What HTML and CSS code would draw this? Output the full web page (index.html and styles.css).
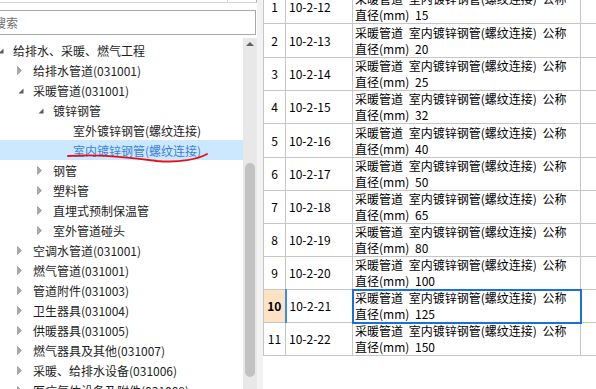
FILE: index.html
```html
<!DOCTYPE html>
<html lang="zh">
<head>
<meta charset="utf-8">
<title>定额树</title>
<link rel="stylesheet" href="styles.css">
</head>
<body>
<div class="app">
  <div class="left">
    <div class="topbar"><div class="topfield"></div><div class="topbtn"></div></div>
    <div class="search"><span class="ph">搜索</span></div>
    <div class="treewrap">
      <div class="tree">
        <div class="row l0"><span class="tw"><svg class="ex" width="6" height="6" viewBox="0 0 6 6"><path d="M5.5 0.5 L5.5 5.5 L0.5 5.5Z"/></svg></span><span>给排水、采暖、燃气工程</span></div>
        <div class="row l1"><span class="tw"><svg class="co" width="5" height="9" viewBox="0 0 5 9"><path d="M0.5 0.5 L4.5 4.5 L0.5 8.5Z"/></svg></span><span>给排水管道(031001)</span></div>
        <div class="row l1"><span class="tw"><svg class="ex" width="6" height="6" viewBox="0 0 6 6"><path d="M5.5 0.5 L5.5 5.5 L0.5 5.5Z"/></svg></span><span>采暖管道(031001)</span></div>
        <div class="row l2"><span class="tw"><svg class="ex" width="6" height="6" viewBox="0 0 6 6"><path d="M5.5 0.5 L5.5 5.5 L0.5 5.5Z"/></svg></span><span>镀锌钢管</span></div>
        <div class="row l3"><span class="tw"></span><span>室外镀锌钢管(螺纹连接)</span></div>
        <div class="row l3 sel"><span class="tw"></span><span>室内镀锌钢管(螺纹连接)</span></div>
        <div class="row l2"><span class="tw"><svg class="co" width="5" height="9" viewBox="0 0 5 9"><path d="M0.5 0.5 L4.5 4.5 L0.5 8.5Z"/></svg></span><span>钢管</span></div>
        <div class="row l2"><span class="tw"><svg class="co" width="5" height="9" viewBox="0 0 5 9"><path d="M0.5 0.5 L4.5 4.5 L0.5 8.5Z"/></svg></span><span>塑料管</span></div>
        <div class="row l2"><span class="tw"><svg class="co" width="5" height="9" viewBox="0 0 5 9"><path d="M0.5 0.5 L4.5 4.5 L0.5 8.5Z"/></svg></span><span>直埋式预制保温管</span></div>
        <div class="row l2"><span class="tw"><svg class="co" width="5" height="9" viewBox="0 0 5 9"><path d="M0.5 0.5 L4.5 4.5 L0.5 8.5Z"/></svg></span><span>室外管道碰头</span></div>
        <div class="row l1"><span class="tw"><svg class="co" width="5" height="9" viewBox="0 0 5 9"><path d="M0.5 0.5 L4.5 4.5 L0.5 8.5Z"/></svg></span><span>空调水管道(031001)</span></div>
        <div class="row l1"><span class="tw"><svg class="co" width="5" height="9" viewBox="0 0 5 9"><path d="M0.5 0.5 L4.5 4.5 L0.5 8.5Z"/></svg></span><span>燃气管道(031001)</span></div>
        <div class="row l1"><span class="tw"><svg class="co" width="5" height="9" viewBox="0 0 5 9"><path d="M0.5 0.5 L4.5 4.5 L0.5 8.5Z"/></svg></span><span>管道附件(031003)</span></div>
        <div class="row l1"><span class="tw"><svg class="co" width="5" height="9" viewBox="0 0 5 9"><path d="M0.5 0.5 L4.5 4.5 L0.5 8.5Z"/></svg></span><span>卫生器具(031004)</span></div>
        <div class="row l1"><span class="tw"><svg class="co" width="5" height="9" viewBox="0 0 5 9"><path d="M0.5 0.5 L4.5 4.5 L0.5 8.5Z"/></svg></span><span>供暖器具(031005)</span></div>
        <div class="row l1"><span class="tw"><svg class="co" width="5" height="9" viewBox="0 0 5 9"><path d="M0.5 0.5 L4.5 4.5 L0.5 8.5Z"/></svg></span><span>燃气器具及其他(031007)</span></div>
        <div class="row l1"><span class="tw"><svg class="co" width="5" height="9" viewBox="0 0 5 9"><path d="M0.5 0.5 L4.5 4.5 L0.5 8.5Z"/></svg></span><span>采暖、给排水设备(031006)</span></div>
        <div class="row l1"><span class="tw"><svg class="co" width="5" height="9" viewBox="0 0 5 9"><path d="M0.5 0.5 L4.5 4.5 L0.5 8.5Z"/></svg></span><span>医疗气体设备及附件(031008)</span></div>
      </div>
      <div class="vscroll"><div class="up"></div><div class="thumb"></div></div>
    </div>
    <svg class="mark" width="257" height="389" viewBox="0 0 257 389"><path d="M68 156 C 95 154, 128 157, 157 161 C 180 163, 198 159, 207 154" /></svg>
  </div>
  <div class="splitter"></div>
  <div class="right">
    <table class="grid">
      <colgroup><col class="c1"><col class="c2"><col class="c3"><col class="c4"></colgroup>
      <tbody>
        <tr><td class="num">1</td><td class="code">10-2-12</td><td class="desc">采暖管道 室内镀锌钢管(螺纹连接) 公称<br>直径(mm) 15</td><td></td></tr>
        <tr class="tall"><td class="num">2</td><td class="code">10-2-13</td><td class="desc">采暖管道 室内镀锌钢管(螺纹连接) 公称<br>直径(mm) 20</td><td></td></tr>
        <tr><td class="num">3</td><td class="code">10-2-14</td><td class="desc">采暖管道 室内镀锌钢管(螺纹连接) 公称<br>直径(mm) 25</td><td></td></tr>
        <tr><td class="num">4</td><td class="code">10-2-15</td><td class="desc">采暖管道 室内镀锌钢管(螺纹连接) 公称<br>直径(mm) 32</td><td></td></tr>
        <tr class="tall"><td class="num">5</td><td class="code">10-2-16</td><td class="desc">采暖管道 室内镀锌钢管(螺纹连接) 公称<br>直径(mm) 40</td><td></td></tr>
        <tr><td class="num">6</td><td class="code">10-2-17</td><td class="desc">采暖管道 室内镀锌钢管(螺纹连接) 公称<br>直径(mm) 50</td><td></td></tr>
        <tr><td class="num">7</td><td class="code">10-2-18</td><td class="desc">采暖管道 室内镀锌钢管(螺纹连接) 公称<br>直径(mm) 65</td><td></td></tr>
        <tr><td class="num">8</td><td class="code">10-2-19</td><td class="desc">采暖管道 室内镀锌钢管(螺纹连接) 公称<br>直径(mm) 80</td><td></td></tr>
        <tr><td class="num">9</td><td class="code">10-2-20</td><td class="desc">采暖管道 室内镀锌钢管(螺纹连接) 公称<br>直径(mm) 100</td><td></td></tr>
        <tr><td class="num cur">10</td><td class="code">10-2-21</td><td class="desc focus">采暖管道 室内镀锌钢管(螺纹连接) 公称<br>直径(mm) 125</td><td></td></tr>
        <tr><td class="num">11</td><td class="code">10-2-22</td><td class="desc">采暖管道 室内镀锌钢管(螺纹连接) 公称<br>直径(mm) 150</td><td></td></tr>
      </tbody>
    </table>
  </div>
</div>
</body>
</html>
```
FILE: styles.css
```css
html, body {
  margin: 0;
  padding: 0;
}
body {
  width: 596px;
  height: 389px;
  overflow: hidden;
  background: #fff;
  font-family: "Noto Sans CJK SC", "Noto Sans", sans-serif;
}
.app {
  display: flex;
  height: 389px;
}
.left {
  width: 257px;
  flex: none;
  position: relative;
  display: flex;
  flex-direction: column;
  background: #fff;
  overflow: hidden;
}
.topbar {
  height: 3px;
  display: flex;
  flex: none;
}
.topfield {
  width: 228px;
  box-sizing: border-box;
  border-bottom: 1px solid #d6d6d6;
  border-right: 1px solid #d6d6d6;
}
.topbtn {
  flex: 1;
  box-sizing: border-box;
  border-bottom: 1px solid #d6d6d6;
  border-right: 1px solid #b8b8b8;
}
.search {
  flex: none;
  margin: 7px 1px 0 -10px;
  height: 25px;
  box-sizing: border-box;
  border: 1px solid #a8a8a8;
  display: flex;
  align-items: center;
  padding-left: 3px;
}
.ph {
  font-size: 12px;
  color: #6e6e6e;
}
.treewrap {
  margin-top: 3px;
  flex: 1;
  display: flex;
  min-height: 0;
}
.tree {
  flex: 1;
  padding-top: 2px;
  overflow: hidden;
}
.row {
  height: 20px;
  display: flex;
  align-items: center;
  font-size: 12px;
  color: #1e1e1e;
  white-space: nowrap;
}
.l0 { padding-left: 0; }
.l1 { padding-left: 20px; }
.l2 { padding-left: 40px; }
.l3 { padding-left: 60px; }
.tw {
  width: 16px;
  margin-left: -3px;
  flex: none;
  display: flex;
  align-items: center;
  height: 20px;
}
.tw .ex {
  margin-left: 1px;
  margin-top: 1px;
  fill: #5a5a5a;
}
.tw .co {
  fill: #a8a8a8;
  stroke: #8a8a8a;
  stroke-width: 0.6;
}
.row.sel {
  background: #cce8ff;
  color: #3a7fdb;
}
.vscroll {
  width: 14px;
  flex: none;
  background: #e8e8e8;
  display: flex;
  flex-direction: column;
  align-items: center;
}
.up {
  margin-top: 4px;
  width: 0;
  height: 0;
  border-left: 4px solid transparent;
  border-right: 4px solid transparent;
  border-bottom: 4px solid #606060;
}
.thumb {
  margin-top: 117px;
  width: 10px;
  height: 214px;
  border-radius: 5px;
  background: #c2c2c2;
}
.mark {
  position: absolute;
  left: 0;
  top: 0;
  pointer-events: none;
  fill: none;
  stroke: #e3121a;
  stroke-width: 1.9;
  stroke-linecap: round;
}
.splitter {
  width: 6px;
  flex: none;
  background: #f2f2f2;
}
.right {
  flex: 1;
  overflow: hidden;
  background: #fff;
}
.grid {
  border-collapse: collapse;
  table-layout: fixed;
  width: 378px;
  margin-top: -10px;
}
.c1 { width: 22px; }
.c2 { width: 67px; }
.c3 { width: 228px; }
.c4 { width: 61px; }
.grid tr {
  height: 33px;
}
.grid tr.tall {
  height: 34px;
}
.grid td {
  border: 1px solid #c6c6c6;
  padding: 0;
  font-size: 12px;
  line-height: 16px;
  color: #000;
  vertical-align: middle;
  white-space: nowrap;
}
.grid td.num {
  text-align: center;
}
.grid td.num.cur {
  background: #fde3c3;
  font-weight: bold;
  border-right: 2px solid #3a8ee6;
}
.grid td.code {
  padding-left: 3px;
}
.grid td.desc {
  padding-left: 2px;
  word-spacing: 3px;
}
.grid td.focus {
  outline: 2px solid #1a6fe0;
  outline-offset: -1px;
}
```
